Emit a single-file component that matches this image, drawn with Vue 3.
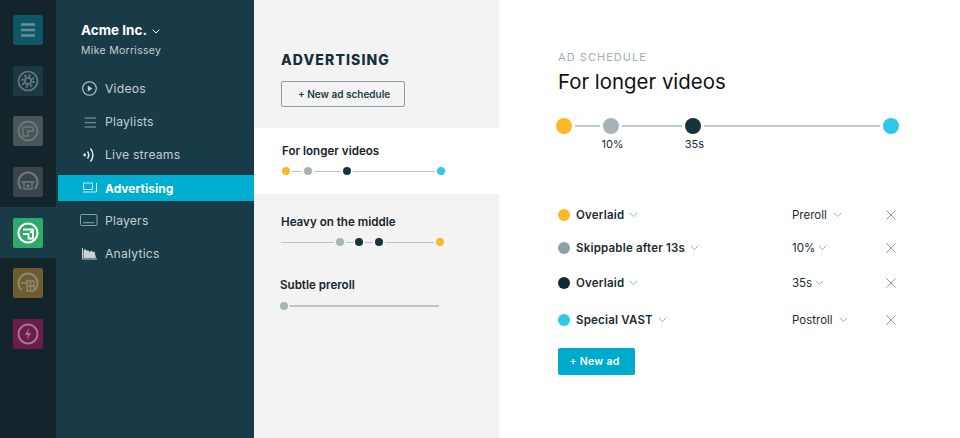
<template>
  <div class="app">
    <nav class="rail">
      <div v-for="item in railItems" :key="item.name" class="rail-item" :class="{ active: item.active }">
        <div class="rail-icon" :class="item.name">
          <svg v-if="item.name === 'menu'" viewBox="0 0 30 30" width="30" height="30" fill="none" stroke="#6c8d94" stroke-width="2.4">
            <path d="M8 9.500h14M8 15h14M8 20.500h14" />
          </svg>
          <svg v-else-if="item.name === 'gear'" viewBox="0 0 30 30" width="30" height="30" fill="none" stroke="#67787c" stroke-width="1.700">
            <circle cx="15" cy="15" r="9.500" />
            <circle cx="15" cy="15" r="3.200" />
            <circle cx="15" cy="15" r="5.500" stroke-width="2.400" stroke-dasharray="2 2.300" />
          </svg>
          <svg v-else-if="item.name === 'grey1'" viewBox="0 0 30 30" width="30" height="30" fill="none" stroke="#6f787b" stroke-width="1.800">
            <circle cx="15" cy="15" r="9.500" />
            <path d="M10 11h10v4h-5v5h-5z" stroke-width="1.400" />
          </svg>
          <svg v-else-if="item.name === 'grey2'" viewBox="0 0 30 30" width="30" height="30" fill="none" stroke="#6e787c" stroke-width="2">
            <path d="M8.500 22a9.500 9.500 0 1 1 13 0" />
            <path d="M8 15h14M11 15v7h8v-7" stroke-width="1.400" />
            <rect x="13.500" y="17.500" width="3" height="3" fill="#6e787c" stroke="none" />
          </svg>
          <svg v-else-if="item.name === 'green'" viewBox="0 0 30 30" width="30" height="30" fill="none" stroke="#fff" stroke-width="2.200">
            <circle cx="15" cy="15" r="9.500" />
            <path d="M10 11.500h10v9h-4.500v-4.500h-5.500" stroke-width="1.800" />
            <rect x="17" y="13" width="2" height="2" fill="#fff" stroke="none" />
          </svg>
          <svg v-else-if="item.name === 'gold'" viewBox="0 0 30 30" width="30" height="30" fill="none" stroke="#8b877a" stroke-width="2">
            <path d="M8.500 22a9.500 9.500 0 1 1 13 0" />
            <path d="M8 15h6M14 13h7v10h-7zM17.500 13v10M14 18h7" stroke-width="1.400" />
          </svg>
          <svg v-else viewBox="0 0 30 30" width="30" height="30" fill="none" stroke="#938089" stroke-width="2">
            <circle cx="15" cy="15" r="9.500" />
            <path d="M16 9l-4 7h3l-1 5 4-7h-3z" fill="#938089" stroke="none" />
          </svg>
        </div>
      </div>
    </nav>

    <aside class="sidebar">
      <div class="account">
        <div class="company">Acme Inc. <svg class="caret" viewBox="0 0 8 5" width="8" height="5"><path d="M.7.7 4 4 7.300.7" fill="none" stroke="#fff" stroke-width="1" /></svg></div>
        <div class="owner">Mike Morrissey</div>
      </div>
      <ul class="nav">
        <li v-for="link in navLinks" :key="link.label" class="nav-link" :class="{ current: link.current }">
          <span class="nav-icon">
            <svg v-if="link.label === 'Videos'" viewBox="0 0 18 18" width="18" height="18" fill="none" stroke="#c3cdd0" stroke-width="1.100">
              <circle cx="8.500" cy="8.500" r="6.800" />
              <path d="M6.800 5.500 11.400 8.500l-4.600 3z" fill="#c3cdd0" stroke="none" />
            </svg>
            <svg v-else-if="link.label === 'Playlists'" viewBox="0 0 18 18" width="18" height="18" fill="none" stroke="#8fa2a8" stroke-width="1">
              <path d="M3.700 5h11.300M3.700 9.700h11.300M3.700 14h11.300" />
            </svg>
            <svg v-else-if="link.label === 'Live streams'" viewBox="0 0 18 18" width="18" height="18" fill="none" stroke="#e0e5e6" stroke-width="1.500">
              <circle cx="3.700" cy="9" r="1.400" fill="#e0e5e6" stroke="none" />
              <path d="M6.500 5.500A6 6 0 0 1 6.500 12.500M9.500 2.500A10 10 0 0 1 9.500 15.500" />
            </svg>
            <svg v-else-if="link.label === 'Advertising'" viewBox="0 0 18 18" width="18" height="18" fill="none" stroke="#cfeaf2" stroke-width="1">
              <path d="M2.500 4h9v6.500h-9zM15.500 4v9H2" />
            </svg>
            <svg v-else-if="link.label === 'Players'" viewBox="0 0 18 18" width="18" height="18" fill="none" stroke="#8fa2a8" stroke-width="1">
              <rect x="-.5" y="2.500" width="16.500" height="11" rx="1" />
              <path d="M2 10.700h11" />
            </svg>
            <svg v-else viewBox="0 0 18 18" width="18" height="18" fill="none">
              <path d="M2.500 13V6L4 3.500 5.500 6 7 5l1.500 2 2-1.500L12 7l1.500-.5L15 13z" fill="#c8d2d4" />
              <path d="M1.500 3v11H16" stroke="#c3cdd0" stroke-width="1" />
            </svg>
          </span>
          {{ link.label }}
        </li>
      </ul>
    </aside>

    <section class="schedules">
      <h2 class="schedules-title">ADVERTISING</h2>
      <button class="outline-btn">+ New ad schedule</button>
      <div
        v-for="schedule in schedules"
        :key="schedule.name"
        class="schedule"
        :class="schedule.cls"
      >
        <h3>{{ schedule.name }}</h3>
        <div class="mini-line">
          <template v-for="(part, i) in schedule.parts" :key="i">
            <span v-if="part.dot" class="mini-dot" :style="{ background: part.dot }"></span>
            <span v-else class="mini-seg" :style="{ width: part.w + 'px' }"></span>
          </template>
        </div>
      </div>
    </section>

    <main class="detail">
      <div class="eyebrow">AD SCHEDULE</div>
      <h1>For longer videos</h1>
      <div class="timeline">
        <span class="big-dot" style="background: #fdb827"></span>
        <span class="big-seg seg-a"></span>
        <span class="big-dot mark" style="background: #a5b3b9"><em>10%</em></span>
        <span class="big-seg seg-b"></span>
        <span class="big-dot mark" style="background: #163340"><em>35s</em></span>
        <span class="big-seg seg-c"></span>
        <span class="big-dot" style="background: #2fc6e8"></span>
      </div>
      <ul class="ads">
        <li v-for="ad in ads" :key="ad.name + ad.at" class="ad">
          <span class="ad-type">
            <span class="ad-dot" :style="{ background: ad.color }"></span>
            <span class="ad-name">{{ ad.name }}</span>
            <svg class="chev" viewBox="0 0 9 6" width="9" height="6"><path d="M.8.8 4.500 4.600 8.200.8" /></svg>
          </span>
          <span class="ad-at">{{ ad.at }}<svg class="chev" :style="{ marginLeft: ad.gap + 'px' }" viewBox="0 0 9 6" width="9" height="6"><path d="M.8.8 4.500 4.600 8.200.8" /></svg></span>
          <svg class="close" viewBox="0 0 10 10" width="10" height="10"><path d="M.5.5l9 9M9.500.5l-9 9" /></svg>
        </li>
      </ul>
      <button class="solid-btn">+ New ad</button>
    </main>
  </div>
</template>

<script setup>
const railItems = [
  { name: "menu" },
  { name: "gear" },
  { name: "grey1" },
  { name: "grey2" },
  { name: "green", active: true },
  { name: "gold" },
  { name: "pink" },
];

const navLinks = [
  { label: "Videos" },
  { label: "Playlists" },
  { label: "Live streams" },
  { label: "Advertising", current: true },
  { label: "Players" },
  { label: "Analytics" },
];

const amber = "#fdb827";
const grey = "#a5b3b9";
const navy = "#163340";
const cyan = "#2fc6e8";

const schedules = [
  {
    name: "For longer videos",
    cls: "selected",
    parts: [
      { dot: amber }, { w: 10 }, { dot: grey }, { w: 27 },
      { dot: navy }, { w: 82 }, { dot: cyan },
    ],
  },
  {
    name: "Heavy on the middle",
    cls: "heavy",
    parts: [
      { w: 53 }, { dot: grey }, { w: 7 }, { dot: navy }, { w: 8 },
      { dot: navy }, { w: 49 }, { dot: amber },
    ],
  },
  {
    name: "Subtle preroll",
    cls: "subtle",
    parts: [{ dot: grey }, { w: 149 }],
  },
];

const ads = [
  { name: "Overlaid", color: amber, at: "Preroll", gap: 6 },
  { name: "Skippable after 13s", color: "#8da0a8", at: "10%", gap: 3 },
  { name: "Overlaid", color: "#0f2a33", at: "35s", gap: 3 },
  { name: "Special VAST", color: cyan, at: "Postroll", gap: 6 },
];
</script>

<style>
body {
  background: #fff;
}
</style>

<style scoped>
.app {
  display: flex;
  width: 960px;
  height: 438px;
  overflow: hidden;
  font-family: Inter, "Noto Sans", sans-serif;
}

.rail {
  width: 56px;
  flex-shrink: 0;
  background: #13252b;
  padding-top: 5px;
  box-sizing: border-box;
}

.rail-item {
  height: 50.6px;
  display: flex;
  align-items: center;
  justify-content: center;
}

.rail-item.active {
  background: #193b47;
}

.rail-icon {
  width: 30px;
  height: 30px;
  border-radius: 2px;
}

.rail-icon svg {
  display: block;
}

.menu { background: #0e5566; }
.gear { background: #1b3a45; }
.grey1 { background: #4a5558; }
.grey2 { background: #3a454a; }
.green { background: #2bac6b; }
.gold { background: #6f5d2e; }
.pink { background: #6e1a4c; }

.sidebar {
  width: 198px;
  flex-shrink: 0;
  background: #193b47;
  color: #c3cdd0;
  padding-top: 22px;
  box-sizing: border-box;
}

.account {
  padding-left: 25px;
}

.company {
  color: #fff;
  font-size: 13.500px;
  font-weight: 700;
  line-height: 16px;
}

.caret {
  margin-left: 2px;
  vertical-align: 1px;
}

.owner {
  font-size: 10.500px;
  line-height: 14px;
  margin-top: 6px;
  letter-spacing: 0.3px;
}

.nav {
  list-style: none;
  margin: 14px 0 0 2px;
  padding: 0;
}

.nav-link {
  height: 33px;
  display: flex;
  align-items: center;
  padding-left: 23px;
  font-size: 12.200px;
  letter-spacing: 0.2px;
}

.nav-link.current {
  height: 26px;
  margin: 4px 0 3px;
  background: #00aed1;
  color: #fff;
  font-size: 12px;
  letter-spacing: 0;
  font-weight: 700;
}

.nav-icon {
  width: 24px;
  height: 18px;
  display: block;
  flex-shrink: 0;
}

.nav-icon svg {
  display: block;
  overflow: visible;
}

.schedules {
  width: 245px;
  flex-shrink: 0;
  background: #f3f3f3;
  padding-top: 51px;
  box-sizing: border-box;
}

.schedules-title {
  margin: 0 0 13px 27px;
  font-size: 14px;
  line-height: 17px;
  font-weight: 800;
  letter-spacing: 1.100px;
  color: #13303b;
}

.outline-btn {
  display: block;
  width: 124px;
  height: 26px;
  margin: 0 0 21px 27px;
  padding: 0 0 0 16px;
  text-align: left;
  background: transparent;
  border: 1px solid #8f9ea3;
  border-radius: 2px;
  font-family: inherit;
  font-size: 10px;
  font-weight: 600;
  color: #193b47;
}

.schedule h3 {
  margin: 0;
  font-size: 11.600px;
  line-height: 15px;
  font-weight: 600;
  color: #16242a;
}

.selected {
  height: 66px;
  background: #fff;
  padding: 16px 0 0 28px;
  box-sizing: border-box;
}

.heavy {
  padding: 21px 0 0 27px;
}

.subtle {
  padding: 31px 0 0 26px;
}

.mini-line {
  display: flex;
  align-items: center;
  gap: 2px;
  margin-top: 7px;
  height: 10px;
}

.subtle .mini-line {
  margin-top: 8px;
}

.mini-dot {
  width: 8px;
  height: 8px;
  border-radius: 50%;
}

.mini-seg {
  height: 1px;
  background: #b9c5ca;
}

.subtle .mini-seg {
  height: 1.500px;
}

.detail {
  flex: 1;
  padding: 51px 0 0 59px;
  box-sizing: border-box;
}

.eyebrow {
  font-size: 11px;
  line-height: 13px;
  letter-spacing: 1.050px;
  color: #9fb0b6;
}

h1 {
  margin: 5px 0 0;
  font-size: 20.400px;
  line-height: 26px;
  font-weight: 400;
  color: #111;
}

.timeline {
  display: flex;
  align-items: center;
  gap: 3px;
  margin: 23px 0 0 -2px;
  width: 343px;
  height: 16px;
}

.big-dot {
  width: 16px;
  height: 16px;
  border-radius: 50%;
  flex-shrink: 0;
  position: relative;
}

.big-dot em {
  position: absolute;
  top: 19px;
  left: 50%;
  transform: translateX(-43%);
  font-style: normal;
  font-size: 11px;
  line-height: 14px;
  color: #1d2d33;
}

.big-seg {
  height: 1.500px;
  background: #bccacd;
}

.seg-a { width: 25px; }
.seg-b { width: 60px; }
.seg-c { width: 176px; }

.ads {
  list-style: none;
  margin: 71px 0 0;
  padding: 0;
  width: 338px;
}

.ad {
  display: grid;
  grid-template-columns: 234px 1fr 10px;
  align-items: center;
  height: 20px;
  font-size: 11.500px;
  color: #1a2c33;
}

.ad:nth-child(2) { margin-top: 12.500px; }
.ad:nth-child(3) { margin-top: 15.500px; }
.ad:nth-child(4) { margin-top: 17px; }

.ad-type,
.ad-at {
  display: flex;
  align-items: center;
}

.ad-dot {
  width: 12px;
  height: 12px;
  border-radius: 50%;
  margin-right: 6px;
  flex-shrink: 0;
}

.ad-name {
  font-weight: 600;
  letter-spacing: 0.2px;
}

.chev {
  fill: none;
  stroke: #9fb0b6;
  stroke-width: 1;
  margin-left: 5px;
}

.close {
  fill: none;
  stroke: #8a9a9f;
  stroke-width: 1;
}

.solid-btn {
  display: block;
  width: 77px;
  height: 27px;
  margin: 18px 0 0;
  padding: 0 4px 0 0;
  border: 0;
  border-radius: 2px;
  background: #00aacd;
  color: #fff;
  font-family: inherit;
  font-size: 10.500px;
  font-weight: 600;
  letter-spacing: 0.3px;
}
</style>
